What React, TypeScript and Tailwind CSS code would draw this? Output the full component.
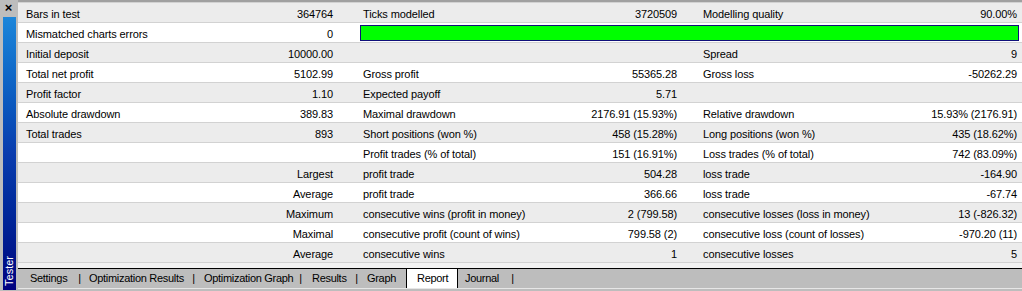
import React from 'react';

type Row = [string, string, string, string, string, string];

const rows: Row[] = [
  ['Bars in test', '364764', 'Ticks modelled', '3720509', 'Modelling quality', '90.00%'],
  ['Mismatched charts errors', '0', '', '', '', ''],
  ['Initial deposit', '10000.00', '', '', 'Spread', '9'],
  ['Total net profit', '5102.99', 'Gross profit', '55365.28', 'Gross loss', '-50262.29'],
  ['Profit factor', '1.10', 'Expected payoff', '5.71', '', ''],
  ['Absolute drawdown', '389.83', 'Maximal drawdown', '2176.91 (15.93%)', 'Relative drawdown', '15.93% (2176.91)'],
  ['Total trades', '893', 'Short positions (won %)', '458 (15.28%)', 'Long positions (won %)', '435 (18.62%)'],
  ['', '', 'Profit trades (% of total)', '151 (16.91%)', 'Loss trades (% of total)', '742 (83.09%)'],
  ['', 'Largest', 'profit trade', '504.28', 'loss trade', '-164.90'],
  ['', 'Average', 'profit trade', '366.66', 'loss trade', '-67.74'],
  ['', 'Maximum', 'consecutive wins (profit in money)', '2 (799.58)', 'consecutive losses (loss in money)', '13 (-826.32)'],
  ['', 'Maximal', 'consecutive profit (count of wins)', '799.58 (2)', 'consecutive loss (count of losses)', '-970.20 (11)'],
  ['', 'Average', 'consecutive wins', '1', 'consecutive losses', '5'],
];

function Sep() {
  return <span className="w-[3px] text-center">|</span>;
}

export default function App() {
  return (
    <div
      className="flex w-[1022px] h-[291px] overflow-hidden bg-[#bdbdbd] text-black text-[11px] leading-none"
      style={{ fontFamily: '"Liberation Sans", Arial, sans-serif' }}
    >
      {/* side title bar */}
      <div className="w-[18px] shrink-0 flex flex-col">
        <div className="h-[17px] flex items-start justify-center pt-[1px] pr-[1px] text-[13px] font-bold">×</div>
        <div className="flex-1 ml-[3px] w-[13px] mb-[1px] bg-gradient-to-b from-[#1d86da] via-[#0a3cae] to-[#000080] flex flex-col justify-end items-center pb-[4px]">
          <span className="text-white text-[11px] [writing-mode:vertical-rl] rotate-180">Tester</span>
        </div>
      </div>

      {/* report panel */}
      <div className="flex-1 flex flex-col">
        <div className="h-[2px] bg-[#a0a0a0]" />
        <div className="h-[1px] bg-[#d2d2d2]" />
        <div className="flex flex-col tracking-[-0.1px]">
          {rows.map((r, i) => (
            <div
              key={i}
              className={`h-[20px] grid grid-cols-[190px_150px_172px_168px_200px_124px] items-start pt-[6px] border-b border-[#d2d2d2] whitespace-nowrap ${
                i % 2 === 0 ? 'bg-[#ececec]' : 'bg-white'
              }`}
            >
              <span className="pl-[8px]">{r[0]}</span>
              <span className="pr-[25px] text-right">{r[1]}</span>
              {i === 1 ? (
                <div className="col-span-4 h-[16px] ml-[2px] mr-[3px] -mt-[4px] bg-[#00ff00] border border-[#10107a]" />
              ) : (
                <>
                  <span className="pl-[5px]">{r[2]}</span>
                  <span className="pr-[21px] text-right">{r[3]}</span>
                  <span className="pl-[5px]">{r[4]}</span>
                  <span className="pr-[5px] text-right">{r[5]}</span>
                </>
              )}
            </div>
          ))}
        </div>

        {/* tabs */}
        <div className="h-[5px] bg-[#f2f2f2]" />
        <div className="h-[1px] bg-black" />
        <div className="h-[19px] flex items-stretch whitespace-nowrap tracking-[-0.3px]">
          <span className="w-[60px] pl-[12px] flex items-center">Settings</span>
          <span className="flex items-center"><Sep /></span>
          <span className="w-[111px] pl-[8px] flex items-center">Optimization Results</span>
          <span className="flex items-center"><Sep /></span>
          <span className="w-[104px] pl-[9px] flex items-center">Optimization Graph</span>
          <span className="flex items-center"><Sep /></span>
          <span className="w-[53px] pl-[10px] flex items-center">Results</span>
          <span className="flex items-center"><Sep /></span>
          <span className="w-[48px] pl-[9px] flex items-center">Graph</span>
          <span className="w-[52px] pl-[10px] flex items-center bg-white border-x border-black">Report</span>
          <span className="w-[53px] pl-[7px] flex items-center">Journal</span>
          <span className="flex items-center"><Sep /></span>
        </div>
        <div className="h-[1px] bg-[#e6e6e6]" />
        <div className="flex-1" />
      </div>
    </div>
  );
}
